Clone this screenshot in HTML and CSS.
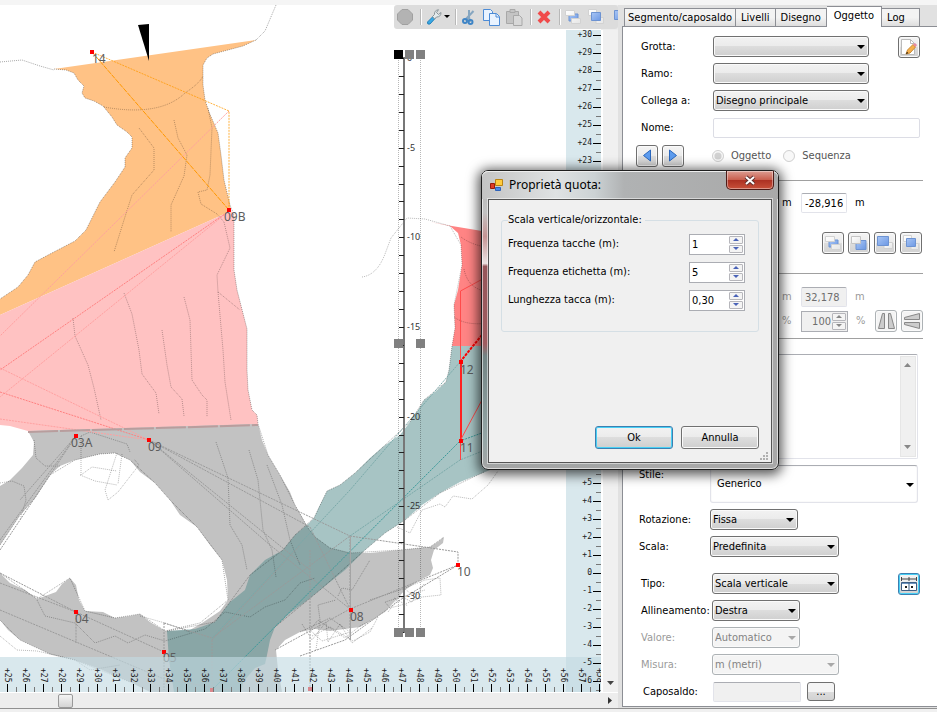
FILE: index.html
```html
<!DOCTYPE html>
<html lang="it">
<head>
<meta charset="utf-8">
<title>Proprietà quota</title>
<link rel="stylesheet" href="styles.css">
</head>
<body>
<svg class="defs" width="0" height="0" aria-hidden="true">
  <defs>
    <linearGradient id="blue" x1="0" y1="0" x2="1" y2="1"><stop offset="0" stop-color="#a9c6f5"/><stop offset="1" stop-color="#6c98e4"/></linearGradient>
    <linearGradient id="pale" x1="0" y1="0" x2="1" y2="1"><stop offset="0" stop-color="#fff"/><stop offset="1" stop-color="#e6e6e6"/></linearGradient>
    <symbol id="i-mid" viewBox="0 0 16 16"><path d="M4 5h9v7H4z" fill="url(#blue)" stroke="#6d93d2"/><path d="M.5 1.500h9v5h-9zM6.500 9.500h9v5h-9z" fill="url(#pale)" stroke="#d2d2d2"/></symbol>
    <symbol id="i-back" viewBox="0 0 16 16"><path d="M5 5.500h10v9H5z" fill="url(#blue)" stroke="#6d93d2"/><path d="M.5 1.500h9v7h-9z" fill="url(#pale)" stroke="#c4c4c4"/></symbol>
    <symbol id="i-front" viewBox="0 0 16 16"><path d="M7 7.500h8.500v6H7z" fill="url(#pale)" stroke="#d0d0d0"/><path d="M.5 1.500h11v9H.5z" fill="url(#blue)" stroke="#6d93d2"/></symbol>
    <symbol id="i-fwd" viewBox="0 0 16 16"><path d="M.5.500h8v6h-8zM8 8.500h7.500v6H8z" fill="url(#pale)" stroke="#d2d2d2"/><path d="M3.500 3.500h9v8h-9z" fill="url(#blue)" stroke="#6d93d2"/></symbol>
  </defs>
</svg>
<div class="window">
  <div class="topstrip"></div>
  <main class="main">
    <section class="workspace">
      <div class="canvas">
        <svg class="drawing" role="img" aria-label="Sezione della grotta">
          <g transform="translate(0 -5)">
            <path fill="#ffc285" d="M54 69L256 40 243 46 228 50 213 54 207 58 203 65 203 85 205 100 209 112 218 133 221 155 224 180 230 205 231 211 0 315V299L18 287 28 275 35 262 50 254 75 241 86 230 100 202 115 182 125 167 125 158 132 148 132 137 127 132 117 125 112 117 103 106 94 101 85 98 82 93 84 86 78 80 74 73 66 70z"/>
            <path fill="#ffc2c2" d="M0 315L231 211 234 215 234 270 237 290 247 329 247 370 248 390 252 410 257 415 258 425 28 431 10 426 0 425z"/>
            <path fill="#c2c2c2" d="M28 431L258 424 262 440 268 455 280 475 290 492 295 505 302 517 308 528 315 537 330 548 350 553 370 553 400 550 430 547 439 541 444 537 443 543 434 550 431 560 433 568 430 575 420 580 405 590 385 612 360 627 330 631 315 629 300 632 285 640 276 650 278 670 282 692H150L130 682 100 669 75 660 50 654 20 640 8 630 0 620V573L10 583 25 590 37 599 56 592 62 584 70 578 76 585 79 600 85 611 103 612 115 618 130 616 140 614 150 622 165 631 190 630 202 623 220 611 228 600 227 580 222 560 210 545 197 527 180 515 170 500 155 483 140 472 130 460 115 453 100 454 75 460 60 466 50 475 35 498 20 515 0 545V486L10 480 22 468 33 455 34 442z"/>
            <path fill="#4f8989" fill-opacity=".5" d="M452 346L449 370 446 382 435 392 424 400 417 412 410 422 400 435 384 446 370 458 355 473 340 485 327 491 319 507 314 518 308 524 295 535 283 550 265 560 250 575 245 590 230 602 215 622 195 629 167 631 169 660 174 692H241L243 682 255 668 265 664 267 655 270 640 275 627 290 613 305 602 320 590 345 570 365 550 385 533 405 520 422 505 440 493 460 482 500 466V346z"/>
            <path fill="#ff8484" d="M430 222L452 226 500 234V346H452L455 328 454 305 458 290 462 265 461 245 458 233 450 226z"/>
            <path d="M138 25L149 24V61z"/>

            <g class="dots edge">
              <path d="M0 62L22 60 40 66 54 70M256 40L265 31 276 5"/>
              <path d="M54 69L66 70 74 73 78 80 84 86 82 93 85 98 94 101 103 106 112 117 117 125 127 132 132 137 132 148 125 158 125 167 115 182 100 202 86 230 75 241 50 254 35 262 28 275 18 287 0 299M256 40L243 46 228 50 213 54 207 58 203 65 203 85 205 100 209 112 218 133 221 155 224 180 230 205 234 215V270L237 290 247 329 247 370 248 390 252 410 257 415 258 424 268 455 280 475 295 505 308 528 315 537 330 548 350 553 400 550 430 547 444 537"/>
              <path d="M0 545L20 515 35 498 50 475 75 460 100 454 115 453 130 460 155 483 170 500 197 527 222 560 228 600 200 623 165 631 140 614 115 618 85 611 70 578 37 599 0 573"/>
              <path d="M452 346L449 370 446 382 424 400 410 422 384 446 355 473 340 485 327 491 314 518 295 535 283 550 250 575 230 602 215 622 167 631M484 472L440 493 405 520 385 533 365 550 320 590 275 627"/>
            </g>
            <g class="dots">
              <path d="M104 107Q160 117 185 93 200 83 203 76M139 128L154 148 154 170 132 195 124 220 114 252M174 120L178 138 187 155 184 176 171 205 171 232M208 108L212 128 210 175 207 190 198 192 201 204 217 214 224 222 230 248 217 275 218 292 240 310M218 292L223 350 225 382 231 420"/>
              <path d="M73 318L75 336 88 365 94 388 101 420M124 293L132 314 139 350 142 374 156 393 159 414M162 330L167 365 171 387 182 399 184 416M184 297L190 320 192 380 202 395 207 400 207 417"/>
              <path d="M34 440L36 458 45 466 60 466M81 436V475L92 467 117 471M81 436L90 432 127 444 130 452M117 453L105 490 108 500 118 492 139 465 134 459M122 454L118 484M80 475L95 481 117 485M0 483L12 481 24 486 26 500 20 520M216 442L228 478 230 525 242 545 247 570M249 450L258 480 263 530 272 550 276 577M267 465L282 505 290 540 300 565"/>
              <path d="M37 600L45 616 75 623 95 643 115 636 128 643 145 635 165 641 205 629 225 612 250 617 265 607 285 600 300 583 315 578"/>
              <path d="M0 636L17 650 37 651 75 660 90 670 120 665M0 620L20 640 50 654 75 660 130 682M140 616L165 623 190 632"/>
              <path d="M362 277Q377 275 385 254L391 238 407 218 425 219 450 226M397 527L410 533 422 510 440 504 445 507 453 496 472 499 488 485 498 471"/>
              <path d="M450 226L461 245 462 265 454 305 455 328 452 346M461 237Q470 244 485 247M464 269Q468 290 490 292M454 317Q466 326 488 323"/>
              <path d="M338 596L342 588 352 590 370 560M316 650L320 620 318 605 336 600M300 632L330 618 350 632 322 641 310 630 318 620 345 638 360 626 378 617 370 632 353 641 330 627 312 636M302 624L312 640 326 622 328 642 340 624 352 643 372 628M370 600L400 590 425 580 440 578 441 595 422 597 405 604 390 608 385 602 425 590M388 612L400 596 412 602 424 584M394 598L408 606M404 588L418 600"/>
              <path d="M398.500 60V632M420.500 60V632"/>
            </g>
            <g class="dash">
              <path d="M0 573L76 612 164 652M0 550L76 436M0 540L76 436 20 500M0 583L76 612V643M149 440L310 527 350 609M149 440L270 545 350 609 458 565M0 610L164 679 240 692M164 623V690M164 623L212 638 350 536V640M350 536L458 552V567M149 440L350 536M149 440L310 570M300 656L345 640 400 600 458 565M212 640L300 545M212 640V690M310 690V550M350 609L275 650"/>
              <path d="M212 690L460 441 490 430" stroke="#3b9a9a"/>
              <path d="M212 638L350 490 460 362M350 536L460 460 490 448" stroke="#7aa9a9"/>
            </g>
            <path d="M350.500 536V640" stroke="#a4a4a4"/>
            <g class="pinkline"><path d="M229 111L0 336M229 211L0 397M0 368L149 440M0 419L149 440" stroke="#ffa0a0"/><path d="M229 211L0 370M0 392L149 440" stroke="#ff8080"/></g>
            <g class="dash2" stroke="#ff9800"><path class="solid" d="M92 52L229 210"/><path d="M92 52L229 111V210" opacity=".75"/></g>
            <path d="M28 432L258 425" stroke="#b89d9d" stroke-width="2" stroke-dasharray="30 2"/>
            <path d="M460.500 362V460" stroke="#ff4040" fill="none"/>
            <path d="M461 362V441" stroke="#f22" stroke-width="2" fill="none"/>
            <path d="M460 362L490 325" stroke="#f00" stroke-width="2" stroke-dasharray="3 1" fill="none"/>
            <path d="M460.500 362V291L490 275M460 441L490 385" stroke="#ff4b4b" fill="none"/>
            <g id="depth-scale"></g>
            <g fill="#f00"><path d="M90 50h4v4h-4zM227 208h4v4h-4zM74 434h4v4h-4zM147 438h4v4h-4zM74 610h4v4h-4zM162 650h4v4h-4zM349 608h4v4h-4zM456 563h4v4h-4zM459 360h4v4h-4zM459 439h4v4h-4z"/><path d="M210 688h4v4h-4zM308 687h4v4h-4z"/></g>
            <g class="stations">
              <text x="92" y="63">14</text><text x="224" y="221">09B</text><text x="71" y="447">03A</text><text x="148" y="451">09</text><text x="75" y="623">04</text><text x="163" y="662">05</text><text x="350" y="621">08</text><text x="457" y="576">10</text><text x="460" y="374">12</text><text x="460" y="452">11</text>
            </g>
            <g fill="#808080"><path fill="#000" d="M394 50h9v9h-9z"/><path d="M405 50h9v9h-9zM416 50h9v9h-9zM394 339h9v9h-9zM416 339h9v9h-9zM394 628h9v9h-9zM405 628h9v9h-9zM416 628h9v9h-9z"/></g>
            <g id="rulers"></g>
          </g>
        </svg>
        <div class="toolbar" role="toolbar" aria-label="Strumenti">
          <button aria-label="Interrompi"><svg width="16" height="16"><path d="M5 .5h6L15.500 5v6L11 15.500H5L.5 11V5z" fill="#b3b3b3" stroke="#a0a0a0"/></svg></button>
          <i class="first"></i>
          <button class="wide" aria-label="Impostazioni"><svg width="25" height="16"><path d="M1.500 13L7 7.500l2 2L4 15q-3 1-2.500-2z" fill="#39a9e6" stroke="#2680b8"/><path d="M6.500 7.500L8.500 5.500Q8 1.500 12.500.7L10.500 3.500l2 2L15 3.500Q15 8 10.500 8L8.500 10z" fill="#e4eaec" stroke="#8a9499"/><path d="M18 6h6l-3 3z"/></svg></button>
          <i class="second"></i>
          <button aria-label="Taglia"><svg width="16" height="16" fill="none"><path d="M8 1v7l-3 4M12.500 2L5 10M8 8l1 5" stroke="#86a6c0" stroke-width="2"/><circle cx="4" cy="12" r="2" stroke="#3f85c6" stroke-width="2"/><circle cx="9.500" cy="13" r="2" stroke="#3f85c6" stroke-width="2"/></svg></button>
          <button aria-label="Copia"><svg width="17" height="17" fill="#e9f3ff" stroke="#4c8bd6"><path d="M.5.500h7l2 2v9h-9z"/><path d="M6.500 4.500h7l3 3v9h-10z"/><path d="M13 5v3h3" fill="none"/></svg></button>
          <button aria-label="Incolla"><svg width="17" height="17" stroke="#a8a8a8" fill="#c4c4c4"><path d="M.5 2.500h12v12H.5z"/><path d="M4 .5h5v3H4z"/><path d="M7.500 6.500h6l2.500 2.500v7.500H7.500z" fill="#d8d8d8"/></svg></button>
          <i></i>
          <button aria-label="Elimina"><svg width="16" height="16"><path d="M3 3l10 10M13 3L3 13" stroke="#f04a4a" stroke-width="4"/></svg></button>
          <i></i>
          <button aria-label="Porta indietro"><svg width="16" height="16"><use href="#i-mid"/></svg></button>
          <button aria-label="Porta avanti"><svg width="16" height="16"><use href="#i-fwd"/></svg></button>
          <button class="cut" aria-label="Porta in primo piano"><svg width="16" height="16"><use href="#i-front"/></svg></button>
        </div>
      </div>
      <div class="vscroll"><svg width="8" height="5"><path d="M0 0h7L3.500 4z" fill="#444"/></svg></div>
      <div class="hscroll"><span class="thumb"></span><svg width="5" height="8"><path d="M0 0v7l4-3.500z" fill="#333"/></svg></div>
    </section>

    <aside class="panel">
      <nav class="tabs">
        <button>Segmento/caposaldo</button><button>Livelli</button><button>Disegno</button><button class="active">Oggetto</button><button>Log</button>
      </nav>
      <form class="page">
        <div class="row"><label for="grotta">Grotta:</label><span class="combo w156"><select id="grotta"><option></option></select></span>
          <button type="button" class="sq end" aria-label="Modifica"><svg width="18" height="18"><path d="M1.500 1.500h9l4 4v11h-13z" fill="#fff" stroke="#bbb"/><path d="M10.500 1.500v4h4" fill="none" stroke="#bbb"/><path d="M6 16l1.500-4L13 6.500l2.500 2.500L10 15z" fill="#f7b04a" stroke="#c98a35"/><path d="M13 6.500l2-1.500 2 2-1.500 2z" fill="#e78aa0"/><path d="M6 16l1-2 1.200 1z"/></svg></button></div>
        <div class="row"><label for="ramo">Ramo:</label><span class="combo w156"><select id="ramo"><option></option></select></span></div>
        <div class="row"><label for="collega">Collega a:</label><span class="combo w156"><select id="collega"><option>Disegno principale</option></select></span></div>
        <div class="row"><label for="nome">Nome:</label><input id="nome" class="grow" type="text"></div>
        <div class="row nav">
          <button type="button" class="sq" aria-label="Precedente"><svg width="10" height="14"><path d="M8.500 1v11L1.500 6.500z" fill="#5c9bee" stroke="#2a67bd"/></svg></button>
          <button type="button" class="sq" aria-label="Successivo"><svg width="10" height="14"><path d="M1.500 1v11l7-5.500z" fill="#5c9bee" stroke="#2a67bd"/></svg></button>
          <label class="radio"><input type="radio" name="modo" checked disabled>Oggetto</label>
          <label class="radio"><input type="radio" name="modo" disabled>Sequenza</label>
        </div>
        <hr>
        <div class="row measure top"><span>m</span><input aria-label="Y" type="text" value="-28,916"><span>m</span></div>
        <div class="row order">
          <button type="button" class="sq" aria-label="Indietro"><svg width="16" height="16"><use href="#i-mid"/></svg></button>
          <button type="button" class="sq" aria-label="In fondo"><svg width="16" height="16"><use href="#i-back"/></svg></button>
          <button type="button" class="sq" aria-label="In primo piano"><svg width="16" height="16"><use href="#i-front"/></svg></button>
          <button type="button" class="sq" aria-label="Avanti"><svg width="16" height="16"><use href="#i-fwd"/></svg></button>
        </div>
        <hr>
        <div class="row measure off"><span>m</span><input aria-label="Altezza" type="text" value="32,178" disabled><span>m</span></div>
        <div class="row measure off"><span>%</span><span class="spin"><input aria-label="Scala percentuale" type="text" value="100" disabled><span class="arrows"><button type="button" class="up" disabled aria-label="Aumenta"></button><button type="button" class="down" disabled aria-label="Riduci"></button></span></span><span>%</span>
          <button type="button" class="sq end" disabled aria-label="Specchia orizzontale"><svg width="17" height="16" fill="#ccc" stroke="#888"><path d="M6.500.500v15H.5L4.500.500zM10.500.500v15h6L12.500.500z"/></svg></button>
          <button type="button" class="sq" disabled aria-label="Specchia verticale"><svg width="16" height="16" fill="#ccc" stroke="#888"><path d="M15.500.500v6H.5v-2zM15.500 15.500v-6H.5v2z"/></svg></button></div>
        <hr>
        <div class="row notes"><textarea aria-label="Note"></textarea><div class="bar"><svg width="8" height="5"><path d="M0 4h7L3.500 0z" fill="#888"/></svg><svg width="8" height="5"><path d="M0 0h7L3.500 4z" fill="#888"/></svg></div></div>
        <div class="row style"><label for="stile">Stile:</label><span class="combo flat"><select id="stile"><option>Generico</option></select></span></div>
        <div class="row shift"><label for="rot">Rotazione:</label><span class="combo w88"><select id="rot"><option>Fissa</option></select></span></div>
        <div class="row shift"><label for="scala">Scala:</label><span class="combo w128"><select id="scala"><option>Predefinita</option></select></span></div>
        <div class="row kind gap"><label for="tipo">Tipo:</label><span class="combo w128"><select id="tipo"><option>Scala verticale</option></select></span>
          <button type="button" class="sq focus end" aria-label="Proprietà quota"><svg width="16" height="14" fill="none" stroke="#444"><path d="M.5 0v4M15.500 0v4M.5 2h15M8 0v4"/><path d="M.5 5.500h15v8H.5z" fill="#fff" stroke="#3d5f85"/><path d="M1 6.500h14" stroke="#6d94bf"/><path d="M8 6v8" stroke="#3d5f85"/><path d="M4 10h2M10 10h2" stroke="#222" stroke-width="2"/></svg></button></div>
        <div class="row kind"><label for="all">Allineamento:</label><span class="combo w88"><select id="all"><option>Destra</option></select></span></div>
        <div class="row kind off"><label for="val">Valore:</label><span class="combo w88"><select id="val" disabled><option>Automatico</option></select></span></div>
        <div class="row kind off"><label for="mis">Misura:</label><span class="combo w128"><select id="mis" disabled><option>m (metri)</option></select></span></div>
        <div class="row anchor"><label for="cap">Caposaldo:</label><input id="cap" class="cap" type="text" disabled><button type="button" class="more">...</button></div>
      </form>
    </aside>
  </main>
  <footer class="bottom"></footer>
</div>

<div class="dialog" role="dialog" aria-labelledby="dlg-title">
  <header class="titlebar">
    <svg width="13" height="13"><path d="M.5 4.500h4v5h-4z" fill="#e03b26" stroke="#981b0c"/><path d="M5.500.500h7v6h-7z" fill="#ffcb3d" stroke="#bb8412"/><path d="M5.500 8.500h5v3h-5z" fill="#4b8ae8" stroke="#2f62b8"/></svg>
    <h1 id="dlg-title">Proprietà quota:</h1>
    <button class="close" aria-label="Chiudi"><svg width="12" height="11"><path d="M2 2l8 7M10 2l-8 7" stroke="#5e3030" stroke-width="4"/><path d="M2 2l8 7M10 2l-8 7" stroke="#fff" stroke-width="2"/></svg></button>
  </header>
  <div class="client">
    <fieldset>
      <legend>Scala verticale/orizzontale:</legend>
      <div class="field"><label for="f1">Frequenza tacche (m):</label><span class="spin"><input id="f1" type="text" value="1"><span class="arrows"><button class="up" aria-label="Aumenta"></button><button class="down" aria-label="Riduci"></button></span></span></div>
      <div class="field"><label for="f2">Frequenza etichetta (m):</label><span class="spin"><input id="f2" type="text" value="5"><span class="arrows"><button class="up" aria-label="Aumenta"></button><button class="down" aria-label="Riduci"></button></span></span></div>
      <div class="field"><label for="f3">Lunghezza tacca (m):</label><span class="spin"><input id="f3" type="text" value="0,30"><span class="arrows"><button class="up" aria-label="Aumenta"></button><button class="down" aria-label="Riduci"></button></span></span></div>
    </fieldset>
    <div class="actions"><button class="default">Ok</button><button>Annulla</button></div>
    <svg class="grip" width="9" height="9" fill="#b0b0b0"><path d="M6 0h2v2H6zM3 3h2v2H3zM6 3h2v2H6zM0 6h2v2H0zM3 6h2v2H3zM6 6h2v2H6z"/></svg>
  </div>
</div>
<script src="rulers.js"></script>
</body>
</html>
```
FILE: rulers.js
```js
// Draws the metre rulers and the depth scale; one metre is STEP pixels.
const NS = "http://www.w3.org/2000/svg";
const STEP = 17.93;
const RIGHT = 601;
const BOTTOM = 692;

function add(parent, name, attrs, text) {
  const el = document.createElementNS(NS, name);
  for (const key in attrs) el.setAttribute(key, attrs[key]);
  if (text !== undefined) el.textContent = text;
  parent.appendChild(el);
}

const signed = n => (n > 0 ? "+" + n : String(n));
const rulers = document.getElementById("rulers");
add(rulers, "rect", { x: RIGHT - 35, y: 30, width: 35, height: 662, class: "band" });
add(rulers, "rect", { x: 0, y: BOTTOM - 35, width: RIGHT, height: 35, class: "band" });

for (let n = 30; n >= -6; n--) {
  const y = Math.round(573 - n * STEP);
  add(rulers, "rect", { x: RIGHT - 8, y, width: 8, height: 1 });
  add(rulers, "rect", { x: RIGHT - 5, y: y + 9, width: 5, height: 1, class: "minor" });
  add(rulers, "text", { x: RIGHT - 9, y: y + 2, class: "mark", "text-anchor": "end" }, signed(n));
}
for (let n = 25; n <= 58; n++) {
  const x = Math.round(7 + (n - 25) * STEP);
  add(rulers, "rect", { x, y: BOTTOM - 8, width: 1, height: 8 });
  add(rulers, "rect", { x: x + 9, y: BOTTOM - 5, width: 1, height: 5, class: "minor" });
  add(rulers, "text", { transform: `translate(${x - 2} ${BOTTOM - 24}) rotate(90)`, class: "mark" }, signed(n));
}

const scale = document.getElementById("depth-scale");
add(scale, "rect", { x: 403, y: 57, width: 2, height: 576, fill: "#777" });
for (let n = 0; n <= 32; n++) {
  const y = Math.round(58 + n * STEP);
  add(scale, "rect", { x: 399, y, width: 5, height: 1, fill: "#222" });
  if (n % 5 === 0) add(scale, "text", { x: 407, y: y + 3, class: "depth" }, n ? -n : 0);
}
```
FILE: styles.css
```css
* { box-sizing: border-box; }
body {
  margin: 0;
  background: #f0f0f0;
  color: #000;
  font: 11px/14px "DejaVu Sans Condensed", "Liberation Sans", sans-serif;
  overflow: hidden;
}
button, input, select, textarea { font: inherit; color: inherit; margin: 0; padding: 0; }
.defs { position: absolute; }

.window { display: flex; flex-direction: column; min-height: 100vh; }
.topstrip { height: 5px; background: #f5f5f5; }
.main { display: flex; flex: 1; background: #e1e1e1; }
.bottom { height: 4px; border-top: 1px solid #909090; background: #f0f0f0; }

.workspace { flex: 1; min-width: 0; display: grid; grid-template: 1fr 16px / 1fr 17px; background: #ececec; }
.canvas { position: relative; background: #fff; min-width: 0; }
.drawing { display: block; position: absolute; inset: 0; width: 100%; height: 100%; overflow: hidden; }
.vscroll { display: flex; align-items: flex-end; justify-content: center; padding: 0 0 6px; background: #f0f0f0; border-left: 2px solid #fff; margin-top: 25px; }
.hscroll { grid-column: 1 / 3; display: flex; align-items: center; justify-content: space-between; padding: 0 5px 0 58px; background: #ededed; border-top: 1px solid #fff; }
.thumb { width: 15px; height: 14px; border: 1px solid #999; border-radius: 2px; background: linear-gradient(#f4f4f4, #d4d4d4); }

.dots path { fill: none; stroke: #000; stroke-opacity: .28; stroke-dasharray: 1 1; }
.edge path { stroke-opacity: .34; }
.dash path { fill: none; stroke-dasharray: 2 1; }
.dash { stroke: #9a9a9a; }
.dash2 path, .pinkline path { fill: none; stroke-dasharray: 2 1; }
.dash2 .solid { stroke-dasharray: 5 1; }
.stations text { font: 12px "Noto Sans", sans-serif; fill: #5c5c5c; }
.band { fill: #c1dae2; fill-opacity: .62; }
.minor { fill: #777; }
.mark { font: 8px "DejaVu Sans Mono", monospace; fill: #222; }
.depth { font: 9px "Noto Sans", sans-serif; fill: #333; }

.toolbar { position: absolute; top: 0; right: -17px; display: flex; align-items: center; width: 224px; height: 24px; padding-left: 3px; background: #dcdcdc; border-radius: 3px; overflow: hidden; }
.toolbar button { flex: none; display: grid; place-items: center; width: 23px; height: 22px; border: 0; background: none; }
.toolbar button:first-child { width: 16px; }
.toolbar .wide { width: 31px; }
.toolbar .cut { margin-left: 3px; }
.toolbar i { flex: none; width: 2px; height: 16px; margin-left: 4px; border-left: 1px solid #b8b8b8; border-right: 1px solid #fff; }
.toolbar .first { margin: 0 1px 0 7px; }
.toolbar .second { margin-left: 1px; }

.panel { width: 319px; padding: 2px 0 1px 4px; display: flex; flex-direction: column; }
.tabs { display: flex; align-items: flex-end; height: 19px; padding-left: 2px; position: relative; }
.tabs button { height: 18px; padding: 0 5px; border: 1px solid #8c8e94; border-bottom: 0; border-left-width: 0; background: linear-gradient(#f3f3f3 50%, #dedede); text-align: left; }
.tabs button:first-child { border-left-width: 1px; padding: 0 3px; }
.tabs .active { height: 21px; padding: 0 7px 3px; margin-bottom: -1px; background: #fff; position: relative; }
.tabs button:last-child { padding-right: 14px; }
.page { flex: 1; border: 1px solid #8c8e94; border-right: 0; background: #fff; padding: 6px 14px 0 0; }

.row { display: flex; align-items: center; height: 27px; padding: 0 3px 0 18px; }
.row > label:first-child { width: 72px; flex: none; white-space: nowrap; }
.row .end { margin-left: auto; }
.off { color: #9a9a9a; }
.shift, .style { padding-left: 16px; }
.gap { margin-top: 10px; }
.grow { flex: 1; min-width: 0; }
input[type="text"], textarea { height: 20px; border: 1px solid #e2e3ea; border-top-color: #abadb3; border-radius: 2px; background: #fff; padding: 0 3px; }
#nome { border-color: #dcdde5; }
input[type="text"]:disabled { background: #f0f0f0; color: #6d6d6d; }

.combo { position: relative; height: 21px; flex: none; }
.combo select { appearance: none; width: 100%; height: 100%; padding: 0 18px 0 2px; border: 1px solid #707070; border-radius: 3px; background: linear-gradient(#f2f2f2, #ebebeb 50%, #dddddd 50%, #cfcfcf); box-shadow: inset 0 0 0 1px #fafafa; opacity: 1; }
.combo::after { content: ""; position: absolute; right: 4px; top: 9px; border: 4px solid transparent; border-top-color: #000; border-bottom: 0; }
.combo select:disabled { background: #f4f4f4; border-color: #adb2b5; color: #838383; }
.off .combo::after { border-top-color: #a8a8a8; }
.w156 { width: 156px; }
.w128 { width: 127px; }
.w88 { width: 88px; }
.shift .w128 { width: 129px; }

.sq { display: grid; place-items: center; width: 22px; height: 22px; border: 1px solid #707070; border-radius: 3px; background: linear-gradient(#f4f4f4, #ebebeb 50%, #dddddd 50%, #d2d2d2); box-shadow: inset 0 0 0 1px #fafafa; }
.sq:disabled { background: #f4f4f4; border-color: #adb2b5; }
.sq.focus { border-color: #3c7fb1; box-shadow: inset 0 0 0 1px #48d0f5; }

.nav { height: 30px; gap: 4px; padding-left: 13px; }
.radio { display: flex; align-items: center; color: #555; margin-left: 8px; }
.radio input { width: 12px; height: 12px; margin: 0 7px 0 0; }
.nav .sq + .radio { margin-left: 24px; }
hr { height: 1px; margin: 9px 0 0; border: 0; background: #a0a0a0; }

.measure { height: 24px; padding: 0 1px 0 159px; }
.measure.top { height: 44px; }
.measure > span { width: 19px; flex: none; }
.measure > input { width: 46px; margin-right: 8px; }
.measure .spin { width: 47px; margin-right: 8px; }
.measure .sq { flex: none; margin-left: 4px; }
.measure .sq.end { margin-left: auto; }
.order { height: 35px; justify-content: flex-end; gap: 4px; padding-right: 1px; }
hr + .measure.off { margin-top: 11px; }
.order + hr { margin-top: 13px; }
.measure.off + hr { margin-top: 5px; }

.notes { position: relative; height: 105px; margin-top: 15px; padding: 0 5px 0 87px; }
.notes textarea { width: 100%; height: 105px; resize: none; padding-right: 20px; }
.bar { position: absolute; top: 2px; right: 7px; bottom: 2px; width: 16px; display: flex; flex-direction: column; align-items: center; justify-content: space-between; padding: 6px 0; background: #f0f0f0; border: 1px solid #e6e6e6; }
.style { height: 38px; margin: 6px 0 3px; padding-right: 5px; }
.style label { align-self: flex-start; padding-top: 3px; }
.combo.flat { flex: 1; height: 38px; }
.flat select { border-color: #abadb3 #e2e3ea #e2e3ea; background: #fff; padding-left: 6px; }
.combo.flat::after { top: 18px; }
.style > label:first-child, .shift > label:first-child, .kind > label:first-child { width: 71px; }
.anchor { padding-left: 20px; }
.anchor > label:first-child { width: 70px; }
.cap { width: 88px; border-color: #dcdde5; }
.more { width: 28px; height: 19px; margin-left: 6px; border: 1px solid #707070; border-radius: 3px; background: linear-gradient(#f4f4f4 50%, #dddddd 50%, #d2d2d2); }

.spin { display: flex; width: 56px; height: 21px; border: 1px solid #abadb3; background: #fff; padding: 1px; }
.spin input[type="text"] { flex: 1; min-width: 0; height: 17px; border: 0; padding: 0 1px; }
.measure .spin { background: #f0f0f0; }
.measure .spin input { text-align: right; }
.arrows { display: flex; flex-direction: column; gap: 1px; width: 14px; flex: none; }
.arrows button { flex: 1; display: grid; place-items: center; border: 1px solid #b6b6bb; background: #f4f4f4; border-radius: 1px; }
.arrows button::after { content: ""; border: 3px solid transparent; }
.arrows .up::after { border-top: 0; border-bottom-color: #4a63b8; }
.arrows .down::after { border-bottom: 0; border-top-color: #4a63b8; }
.arrows .up:disabled::after { border-bottom-color: #888; }
.arrows .down:disabled::after { border-top-color: #888; }

.dialog {
  position: absolute; left: 481px; top: 170px; width: 298px;
  padding: 0 6px 6px; border: 1px solid #1f1f1f; border-radius: 7px;
  background: linear-gradient(90deg, transparent 50%, #a8a8a8 50%), linear-gradient(#b4b4b4, #c2c2c2 14%, #c69494 22%, #ebe2e2 31%, #96565a 32%, #a05c60 58%, #738484 62%, #94a6a6 90%, #a5a5a5);
  box-shadow: inset 0 0 0 1px rgba(255, 255, 255, .6), 0 2px 12px 3px rgba(0, 0, 0, .65);
}
.titlebar { display: flex; align-items: center; height: 28px; margin: 0 -6px; padding-left: 8px; border-radius: 6px 6px 0 0; background: linear-gradient(90deg, #c4c4c4, #dfe2e3 25%, #ccd2d4 38%, #b0b2b3 48%, #a9a9a9); box-shadow: inset 0 1px 0 #eee; }
.titlebar h1 { flex: 1; margin: 0 0 0 6px; font: 12px/16px "Noto Sans", sans-serif; }
.close { align-self: flex-start; display: grid; place-items: center; width: 48px; height: 19px; margin-right: 4px; border: 1px solid #4e1b17; border-top: 0; border-radius: 0 0 5px 5px; background: linear-gradient(#dc9d92, #c9604f 48%, #ac3022 50%, #c8503a); box-shadow: inset 0 0 0 1px rgba(255, 255, 255, .4); }
.client { position: relative; display: flex; flex-direction: column; height: 264px; padding: 13px 12px 13px; border: 1px solid #555; outline: 1px solid rgba(255, 255, 255, .5); background: #f0f0f0; }
fieldset { margin: 0; padding: 3px 13px 17px 6px; border: 1px solid #d5dfe5; border-radius: 3px; min-width: 0; }
legend { padding: 0 3px 0 0; }
.field { display: flex; align-items: center; justify-content: space-between; height: 28px; }
.actions { display: flex; justify-content: flex-end; gap: 8px; margin-top: auto; }
.actions button { width: 78px; height: 23px; border: 1px solid #707070; border-radius: 3px; background: linear-gradient(#f2f2f2, #ebebeb 50%, #dddddd 50%, #cfcfcf); box-shadow: inset 0 0 0 1px #fafafa; }
.actions .default { border-color: #3c7fb1; box-shadow: inset 0 0 0 1px #48d0f5; }
.grip { position: absolute; right: 2px; bottom: 1px; }
```
